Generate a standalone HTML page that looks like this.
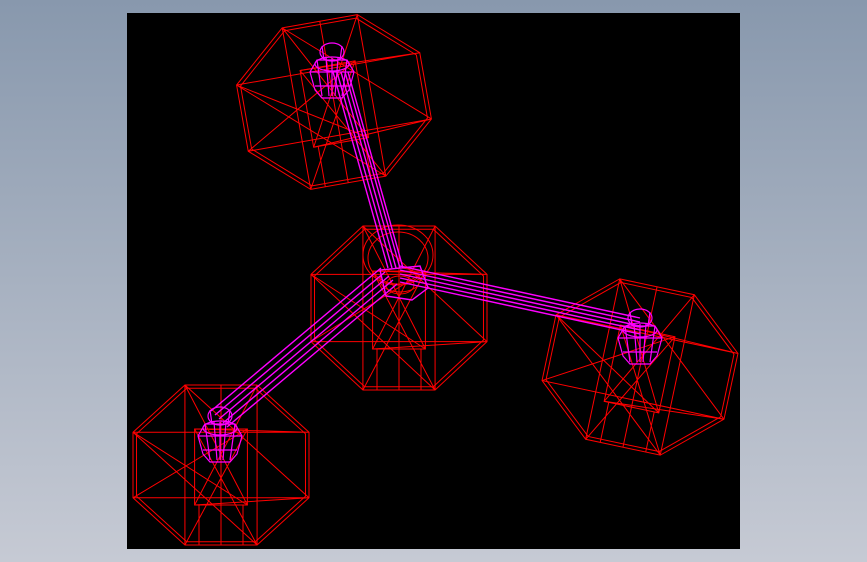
<!DOCTYPE html>
<html><head><style>
html,body{margin:0;padding:0;width:867px;height:562px;overflow:hidden;background:linear-gradient(#8898ad,#c6cad4);}
svg{position:absolute;left:0;top:0}
</style></head><body>
<svg width="867" height="562" viewBox="0 0 867 562">
<rect x="127" y="13" width="613" height="536" fill="#000"/>
<defs>
<g id="oct" fill="none" stroke="#ff0000" stroke-width="1">
<polygon vector-effect="non-scaling-stroke" points="-0.41,-1 0.41,-1 1,-0.41 1,0.41 0.41,1 -0.41,1 -1,0.41 -1,-0.41"/>
<polygon vector-effect="non-scaling-stroke" points="-0.39,-0.96 0.39,-0.96 0.96,-0.39 0.96,0.39 0.39,0.96 -0.39,0.96 -0.96,0.39 -0.96,-0.39"/>
<polygon vector-effect="non-scaling-stroke" points="-0.3,-0.45 0.3,-0.45 0.3,0.5 -0.3,0.5"/>
<path vector-effect="non-scaling-stroke" d="M-0.41,-1L0.3,0.5M0.41,-1L-0.3,0.5M1,-0.41L-0.3,-0.45M1,0.41L-0.3,0.5M0.41,1L-0.3,-0.45M-0.41,1L0.3,-0.45M-1,0.41L0.3,-0.45M-1,-0.41L0.3,0.5M-1,0.41L1,0.41M-1,-0.41L1,-0.41M-0.41,-1L-0.41,1M0.41,-1L0.41,1M-0.41,-1L1,0.41M0.41,1L-1,-0.41M-0.25,0.5L-0.25,1M0.25,0.5L0.25,1M0,-1L0,1"/>
</g>
<g id="cap" fill="none" stroke="#ff00ff" stroke-width="1.2">
<ellipse cx="0" cy="-22" rx="12" ry="9"/>
<ellipse cx="0" cy="-10" rx="17" ry="7"/>
<path d="M-22,-2L-17,16L-10,24L10,24L17,16L22,-2L15,-14L-15,-14Z"/>
<path d="M-15,-14L-10,22M-6,-16L-3,22M0,-16L0,22M6,-16L3,22M15,-14L10,22M-22,-2L22,-2M-17,12L17,12M-10,-28L-8,-14M10,-28L8,-14"/>
</g>
</defs>
<use href="#oct" transform="translate(334,102) rotate(-10) scale(93,82)"/>
<use href="#oct" transform="translate(399,308) scale(88,82)"/>
<use href="#oct" transform="translate(640,367) rotate(12) scale(93,82)"/>
<use href="#oct" transform="translate(221,465) scale(88,80)"/>
<g fill="none" stroke="#ff0000">
<ellipse cx="398" cy="255" rx="35" ry="30"/>
<ellipse cx="398" cy="258" rx="30" ry="26"/>
<ellipse cx="400" cy="280" rx="20" ry="12"/>
<ellipse cx="400" cy="285" rx="14" ry="9"/>
</g>
<g stroke="#ff00ff" stroke-width="1.4" fill="none">
<path d="M333,72L388,268M337,72L392,268M341,72L396,268M345,72L400,268M348,72L403,268"/>
<path d="M400,266L640,318M400,270L640,322M400,274L640,326M400,278L640,330M400,282L640,334"/>
<path d="M381,268L211,411M385,272L215,415M389,276L219,419M393,280L223,423M397,284L227,427"/>
<path d="M380,270L420,266L428,288L412,300L386,296Z"/>
</g>
<use href="#cap" transform="translate(332,74)"/>
<use href="#cap" transform="translate(640,340)"/>
<use href="#cap" transform="translate(220,438)"/>
</svg>
</body></html>
